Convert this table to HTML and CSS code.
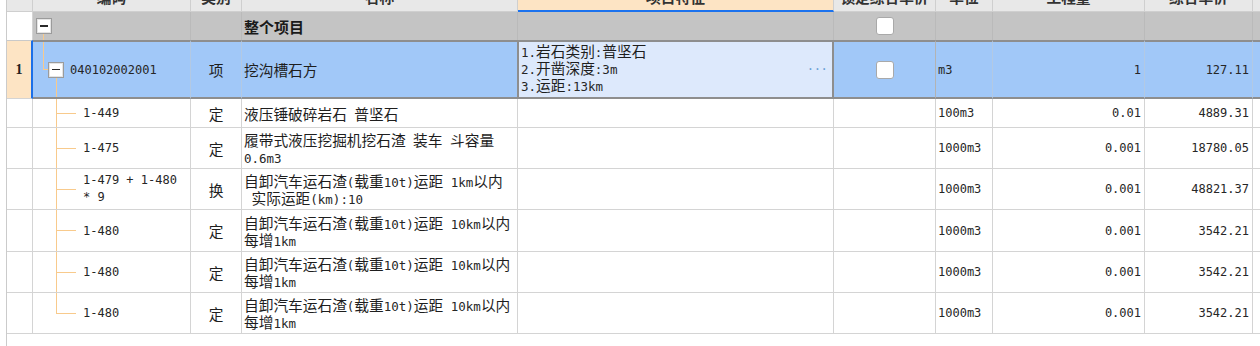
FILE: index.html
```html
<!DOCTYPE html>
<html lang="zh-CN">
<head>
<meta charset="utf-8">
<title>清单</title>
<link rel="stylesheet" href="styles.css">
</head>
<body>
<div class="sheet">
  <div class="row hd">
    <div class="c"></div>
    <div class="c">编码</div>
    <div class="c">类别</div>
    <div class="c">名称</div>
    <div class="c feat">项目特征</div>
    <div class="c">锁定综合单价</div>
    <div class="c">单位</div>
    <div class="c">工程量</div>
    <div class="c">综合单价</div>
    <div class="c x"></div>
  </div>

  <div class="row grp">
    <div class="c no"></div>
    <div class="c code"><span class="tg"></span></div>
    <div class="c"></div>
    <div class="c name"><b>整个项目</b></div>
    <div class="c"></div>
    <div class="c ck"><span class="box"></span></div>
    <div class="c"></div>
    <div class="c"></div>
    <div class="c"></div>
    <div class="c x"></div>
  </div>

  <div class="row sel">
    <div class="c no">1</div>
    <div class="c code"><span class="tg"></span><span class="m">040102002001</span></div>
    <div class="c cat">项</div>
    <div class="c name">挖沟槽石方</div>
    <div class="c feat">
      <div class="lines">
        <div><span class="m">1.</span>岩石类别<span class="m">:</span>普坚石</div>
        <div><span class="m">2.</span>开凿深度<span class="m">:3m</span></div>
        <div><span class="m">3.</span>运距<span class="m">:13km</span></div>
      </div>
      <span class="more">···</span>
    </div>
    <div class="c ck"><span class="box"></span></div>
    <div class="c unit"><span class="m">m3</span></div>
    <div class="c num"><span class="m">1</span></div>
    <div class="c num"><span class="m">127.11</span></div>
    <div class="c x"></div>
  </div>

  <div class="row h29">
    <div class="c no"></div>
    <div class="c code child"><span class="m">1-449</span></div>
    <div class="c cat">定</div>
    <div class="c name"><div class="lines"><div>液压锤破碎岩石<span class="m"> </span>普坚石</div></div></div>
    <div class="c"></div>
    <div class="c"></div>
    <div class="c unit"><span class="m">100m3</span></div>
    <div class="c num"><span class="m">0.01</span></div>
    <div class="c num"><span class="m">4889.31</span></div>
    <div class="c x"></div>
  </div>

  <div class="row h41">
    <div class="c no"></div>
    <div class="c code child"><span class="m">1-475</span></div>
    <div class="c cat">定</div>
    <div class="c name"><div class="lines"><div>履带式液压挖掘机挖石渣<span class="m"> </span>装车<span class="m"> </span>斗容量</div><div><span class="m">0.6m3</span></div></div></div>
    <div class="c"></div>
    <div class="c"></div>
    <div class="c unit"><span class="m">1000m3</span></div>
    <div class="c num"><span class="m">0.001</span></div>
    <div class="c num"><span class="m">18780.05</span></div>
    <div class="c x"></div>
  </div>

  <div class="row h41">
    <div class="c no"></div>
    <div class="c code child"><div class="lines m"><div>1-479 + 1-480</div><div>* 9</div></div></div>
    <div class="c cat">换</div>
    <div class="c name"><div class="lines"><div>自卸汽车运石渣<span class="m">(</span>载重<span class="m">10t)</span>运距<span class="m"> 1km</span>以内</div><div><span class="m"> </span>实际运距<span class="m">(km):10</span></div></div></div>
    <div class="c"></div>
    <div class="c"></div>
    <div class="c unit"><span class="m">1000m3</span></div>
    <div class="c num"><span class="m">0.001</span></div>
    <div class="c num"><span class="m">48821.37</span></div>
    <div class="c x"></div>
  </div>

  <div class="row h42">
    <div class="c no"></div>
    <div class="c code child"><span class="m">1-480</span></div>
    <div class="c cat">定</div>
    <div class="c name"><div class="lines"><div>自卸汽车运石渣<span class="m">(</span>载重<span class="m">10t)</span>运距<span class="m"> 10km</span>以内</div><div>每增<span class="m">1km</span></div></div></div>
    <div class="c"></div>
    <div class="c"></div>
    <div class="c unit"><span class="m">1000m3</span></div>
    <div class="c num"><span class="m">0.001</span></div>
    <div class="c num"><span class="m">3542.21</span></div>
    <div class="c x"></div>
  </div>

  <div class="row h41">
    <div class="c no"></div>
    <div class="c code child"><span class="m">1-480</span></div>
    <div class="c cat">定</div>
    <div class="c name"><div class="lines"><div>自卸汽车运石渣<span class="m">(</span>载重<span class="m">10t)</span>运距<span class="m"> 10km</span>以内</div><div>每增<span class="m">1km</span></div></div></div>
    <div class="c"></div>
    <div class="c"></div>
    <div class="c unit"><span class="m">1000m3</span></div>
    <div class="c num"><span class="m">0.001</span></div>
    <div class="c num"><span class="m">3542.21</span></div>
    <div class="c x"></div>
  </div>

  <div class="row h41">
    <div class="c no"></div>
    <div class="c code child last"><span class="m">1-480</span></div>
    <div class="c cat">定</div>
    <div class="c name"><div class="lines"><div>自卸汽车运石渣<span class="m">(</span>载重<span class="m">10t)</span>运距<span class="m"> 10km</span>以内</div><div>每增<span class="m">1km</span></div></div></div>
    <div class="c"></div>
    <div class="c"></div>
    <div class="c unit"><span class="m">1000m3</span></div>
    <div class="c num"><span class="m">0.001</span></div>
    <div class="c num"><span class="m">3542.21</span></div>
    <div class="c x"></div>
  </div>
</div>
</body>
</html>
```

FILE: styles.css
```css
html, body {
  margin: 0;
  padding: 0;
  background: #ffffff;
}

body {
  font-family: "Noto Sans CJK SC", "Noto Sans", sans-serif;
  font-size: 14.7px;
  line-height: 17px;
  color: #1e1e1e;
  overflow: hidden;
  height: 346px;
}

.sheet {
  margin-left: 6px;
  height: 346px;
  border-left: 1px solid #cbcbcb;
  overflow: hidden;
}

.row {
  display: grid;
  grid-template-columns: 26px 158px 51px 276px 316px 102px 57px 152px 108px 1fr;
}

.c {
  box-sizing: border-box;
  display: flex;
  align-items: center;
  min-width: 0;
  overflow: hidden;
  white-space: nowrap;
  border-right: 1px solid #d4d4d4;
  border-bottom: 1px solid #d4d4d4;
}

.c.x {
  border-right: none;
}

.m {
  font-family: "DejaVu Sans Mono", "Liberation Mono", monospace;
  font-size: 12px;
  line-height: 1;
  white-space: pre;
  color: #262626;
}

.name .m,
.feat .m {
  font-size: 12.5px;
}

.lines {
  display: flex;
  flex-direction: column;
}

.lines > div {
  height: 17px;
  line-height: 17px;
  white-space: pre;
}

/* header */
.hd {
  height: 30px;
  margin-top: -18px;
  background: #e8e8e8;
}

.hd .c {
  justify-content: center;
  font-weight: bold;
  color: #333333;
  border-color: #cfcfcf;
}

.hd .c.feat {
  background: #fde4c4;
  border-bottom: 2px solid #1b72ee;
}

/* group row */
.grp {
  height: 28px;
  background: #c4c4c4;
}

.grp .c {
  border-bottom: none;
  border-right-color: #bababa;
}

.grp .c.no {
  background: #ffffff;
  border-right-color: #d4d4d4;
}

.grp .code {
  padding-left: 3px;
  background: linear-gradient(#f8ca8c, #f8ca8c) no-repeat 10px 100% / 1px 6px;
}

.grp .name b {
  font-weight: bold;
  font-size: 15px;
  color: #1a1a1a;
}

/* tree toggle box */
.tg {
  box-sizing: border-box;
  flex: none;
  width: 16px;
  height: 16px;
  background: #ffffff;
  border: 1px solid #9b9b9b;
  box-shadow: inset 0 0 0 1px #e4e4e4;
  display: flex;
  align-items: center;
  justify-content: center;
}

.tg::before {
  content: "";
  width: 8px;
  height: 1.5px;
  background: #2a2a2a;
}

/* checkbox */
.ck {
  justify-content: center;
}

.box {
  box-sizing: border-box;
  width: 18px;
  height: 18px;
  background: #ffffff;
  border: 1px solid #a9a9a9;
  border-radius: 3px;
  margin-left: 1px;
}

/* selected row */
.sel {
  height: 59px;
  background: #a1c8f8;
}

.sel .c {
  border-top: 2px solid #8e8e8e;
  border-bottom: 2px solid #8e8e8e;
  border-right-color: #b3c9e3;
}

.sel .c.no {
  background: #fde4c4;
  border-top: 1px solid #c9c9c9;
  border-bottom: 1px solid #d4d4d4;
  border-right: 2px solid #1b6fe8;
  justify-content: center;
  font-family: "Liberation Serif", serif;
  font-weight: bold;
  font-size: 14px;
  color: #222222;
}

.sel .code {
  padding-left: 15px;
  background:
    linear-gradient(#f8ca8c, #f8ca8c) no-repeat 10px 0 / 1px 50%,
    linear-gradient(#f8ca8c, #f8ca8c) no-repeat 10px 50% / 6px 1px,
    linear-gradient(#f8ca8c, #f8ca8c) no-repeat 23px 100% / 1px 50%;
}

.sel .code .tg {
  margin-right: 6px;
}

.sel .c.feat {
  background: #dde9fc;
  align-items: flex-start;
  padding-left: 2px;
  border-left: 2px solid #8e8e8e;
  border-right: 2px solid #8e8e8e;
  margin-left: -1px;
}

.sel .c.feat .lines {
  flex: 1;
}

.more {
  align-self: center;
  margin-right: 5px;
  color: #6a9fd6;
  font-family: "Liberation Mono", monospace;
  font-size: 13px;
  letter-spacing: -1px;
}

.sel .c.ck {
  border-right-color: #b3b3b3;
}

/* child rows */
.h29 { height: 29px; }
.h41 { height: 41px; }
.h42 { height: 42px; }

.code.child {
  padding-left: 50px;
  background:
    linear-gradient(#f8ca8c, #f8ca8c) no-repeat 23px 0 / 1px 100%,
    linear-gradient(#f8ca8c, #f8ca8c) no-repeat 23px 50% / 20px 1px;
}

.code.child.last {
  background:
    linear-gradient(#f8ca8c, #f8ca8c) no-repeat 23px 0 / 1px 50%,
    linear-gradient(#f8ca8c, #f8ca8c) no-repeat 23px 50% / 20px 1px;
}

.code.child .lines.m > div {
  line-height: 17px;
}

.cat {
  justify-content: center;
}

.name {
  padding-left: 2px;
}

.unit {
  padding-left: 2px;
}

.num {
  justify-content: flex-end;
  padding-right: 3px;
}
```
